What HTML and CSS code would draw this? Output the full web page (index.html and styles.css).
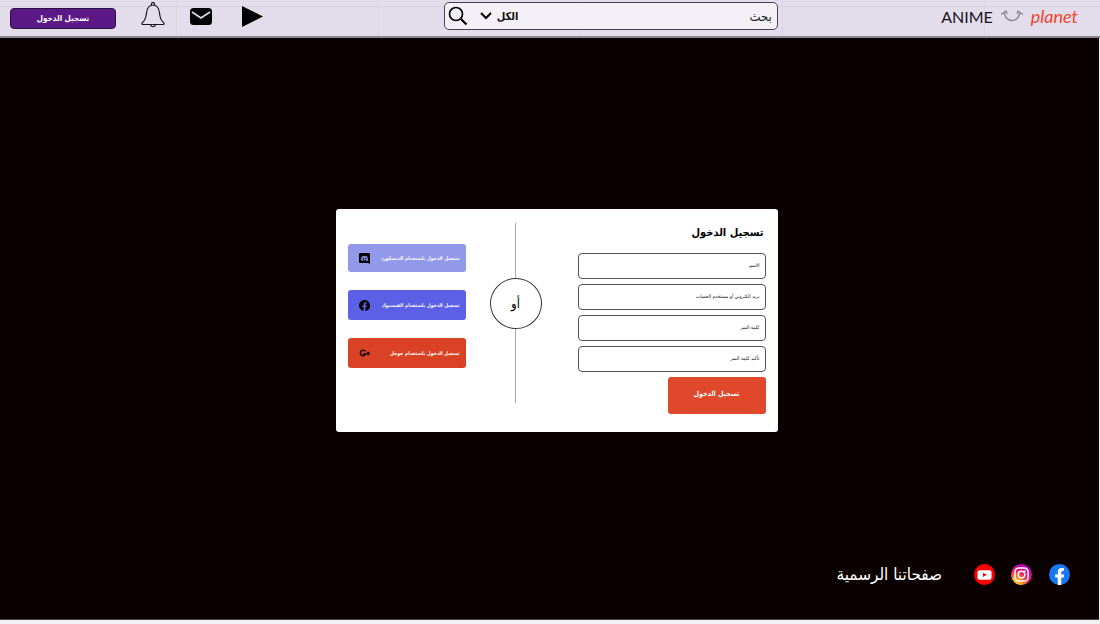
FILE: index.html
```html
<!DOCTYPE html>
<html lang="ar" dir="rtl">
<head>
<meta charset="utf-8">
<title>Anime Planet</title>
<link rel="stylesheet" href="styles.css">
</head>
<body>
<header class="topbar">
  <a class="logo" href="#" dir="ltr">
    <span class="logo-anime">ANIME</span>
    <svg class="logo-smile" viewBox="0 0 24 14" fill="none" stroke="#85808f" stroke-width="1.300"><path d="M1 5.500 6 2l1 3M17 5l1-3 5 3.500M4 3.500C5 8 8 11.500 12 11.500S19 8 20 3.500"/></svg>
    <span class="logo-planet">planet</span>
  </a>
  <form class="search">
    <input class="search-input" type="text" placeholder="بحث" aria-label="بحث">
    <span class="filter">
      <select class="filter-select" aria-label="القسم"><option>الكل</option></select>
      <svg class="chevron" viewBox="0 0 12 8" fill="none" stroke="#000" stroke-width="2"><path d="m1 1 5 5 5-5"/></svg>
    </span>
    <button class="icon-button" type="button" aria-label="ابحث"><svg class="glass" viewBox="0 0 20 20" fill="none" stroke="#000"><circle cx="8" cy="8" r="6.500" stroke-width="1.700"/><path d="m13 13 5.500 5.500" stroke-width="2.200"/></svg></button>
  </form>
  <nav class="actions">
    <button class="icon-button" type="button" aria-label="تشغيل"><svg class="play" viewBox="0 0 21 21"><path d="M0 0 21 10.500 0 21z"/></svg></button>
    <button class="icon-button" type="button" aria-label="الرسائل"><svg class="mail" viewBox="0 0 22 17"><rect width="22" height="17" rx="3.500"/><path d="m2 4 9 6 9-6" fill="none" stroke="#e3ddeb" stroke-width="1.600"/></svg></button>
    <button class="icon-button" type="button" aria-label="الإشعارات"><svg class="bell" viewBox="0 0 24 26" fill="none" stroke="#17131c" stroke-width="1.200"><path d="M10.500 3V2a1.500 1.500 0 0 1 3 0v1M12 3C7.500 3 6 7 5.500 11 5 16 4 18.500 1.500 20.500c-.8.800-.6 2 .4 2h20.200c1 0 1.200-1.200.4-2C20 18.500 19 16 18.500 11 18 7 16.500 3 12 3zM9.500 22.500c.5 3 4.500 3 5 0"/></svg></button>
    <button class="login-button" type="button">تسجيل الدخول</button>
  </nav>
</header>
<main class="stage">
  <section class="card">
    <form class="login-form">
      <h1 class="title">تسجيل الدخول</h1>
      <input class="field" type="text" placeholder="الاسم" aria-label="الاسم">
      <input class="field" type="text" placeholder="بريد الكتروني أو مستخدم الحساب" aria-label="بريد الكتروني أو مستخدم الحساب">
      <input class="field" type="password" placeholder="كلمة السر" aria-label="كلمة السر">
      <input class="field" type="password" placeholder="تأكيد كلمة السر" aria-label="تأكيد كلمة السر">
      <button class="submit" type="button">تسجيل الدخول</button>
    </form>
    <div class="divider"><span class="line"></span><span class="or">أو</span><span class="line line-long"></span></div>
    <div class="providers">
      <button class="provider discord" type="button"><span>تسجيل الدخول باستخدام الديسكورد</span><svg class="brand" viewBox="0 0 12 12"><path d="M1 0h10l1 1v11l-2-1H1l-1-1V1z"/><path fill="#7d83cf" d="M3 4c1-1 1.500-1 2-.7h2C7.500 3 8 3 9 4c.7 1 1 2.500 1 4-.8.700-1.500.8-2 .8L7.500 8h-3L4 8.800c-.5 0-1.200-.1-2-.8 0-1.500.3-3 1-4z"/><circle cx="4.600" cy="6.200" r=".8"/><circle cx="7.400" cy="6.200" r=".8"/></svg></button>
      <button class="provider facebook" type="button"><span>تسجيل الدخول باستخدام الفيسبوك</span><svg class="brand" viewBox="0 0 24 24"><path d="M24 12a12 12 0 1 0-14 11.900v-8.400H7V12h3V9.400C10 6.400 11.800 4.700 14.500 4.700c1.300 0 2.700.2 2.700.2v3h-1.500C14.200 7.900 14 8.800 14 9.700V12h3.300l-.5 3.500H14v8.400A12 12 0 0 0 24 12z"/></svg></button>
      <button class="provider google" type="button"><span>تسجيل الدخول باستخدام جوجل</span><svg class="brand" viewBox="0 0 12 12" fill="none" stroke="#17100e" stroke-width="1.700"><path d="M7 3.700A3 3 0 1 0 7.300 6.500H4.500M8 6h4M10 4v4"/></svg></button>
    </div>
  </section>
  <footer class="socials">
    <a class="social social-facebook" href="#" aria-label="Facebook"><svg viewBox="0 0 24 24"><circle cx="12" cy="12" r="12" fill="#1877f2"/><path fill="#fff" d="M10 24v-8.500H7V12h3V9.400C10 6.400 11.800 4.700 14.500 4.700c1.300 0 2.700.2 2.700.2v3h-1.500C14.200 7.900 14 8.800 14 9.700V12h3.300l-.5 3.500H14V24z"/></svg></a>
    <a class="social" href="#" aria-label="Instagram"><svg viewBox="0 0 24 24"><defs><radialGradient id="ig" cx=".2" cy="1" r="1.100"><stop offset="0" stop-color="#ffd83d"/><stop offset=".3" stop-color="#ff9a1f"/><stop offset=".6" stop-color="#ed1d63"/><stop offset="1" stop-color="#a000c4"/></radialGradient></defs><circle cx="12" cy="12" r="12" fill="url(#ig)"/><g fill="none" stroke="#fff" stroke-width="1.700"><rect x="4.500" y="4.500" width="15" height="15" rx="4.500"/><circle cx="12" cy="12" r="3.800"/></g><circle cx="16" cy="8" r="1" fill="#fff"/></svg></a>
    <a class="social" href="#" aria-label="YouTube"><svg viewBox="0 0 24 24"><circle cx="12" cy="12" r="12" fill="#f00"/><rect x="4" y="7" width="16" height="11" rx="2.500" fill="#fff"/><path fill="#f00" d="m10.300 10 4.400 2.400-4.400 2.400z"/></svg></a>
    <span class="socials-label">صفحاتنا الرسمية</span>
  </footer>
</main>
</body>
</html>
```
FILE: styles.css
```css
* { box-sizing: border-box; }
body {
  margin: 0;
  min-height: 100vh;
  padding: 0 0 4px;
  display: flex;
  flex-direction: column;
  font-family: "DejaVu Sans Condensed", "DejaVu Sans", sans-serif;
  background: #f3f1f3;
}
button, input, select { font-family: inherit; margin: 0; }
svg { display: block; }

.topbar {
  display: grid;
  grid-template-columns: 29fr 30fr 40fr;
  align-items: start;
  height: 38px;
  border-bottom: 2px solid #8b858f;
  background:
    linear-gradient(#d9d4e1, #d9d4e1) 0 6px / 100% 1px no-repeat,
    linear-gradient(90deg, #dad5e2 1px, transparent 1px) 176px 0 / 202px 100%,
    #e3ddeb;
}
.logo {
  display: flex;
  justify-content: flex-end;
  align-items: center;
  gap: 7px;
  height: 32px;
  padding-right: 22px;
  text-decoration: none;
  font-family: Lato, sans-serif;
}
.logo-anime { font-size: 16px; color: #17131c; }
.logo-smile { width: 24px; height: 14px; }
.logo-planet { font-size: 18px; font-style: italic; color: #f2452b; }

.search {
  display: flex;
  align-items: center;
  height: 28px;
  margin-top: 2px;
  padding: 0 5px 0 3px;
  border: 1px solid #46424c;
  border-radius: 5px;
  background: #f3f1f7;
}
.search-input {
  flex: 1;
  min-width: 0;
  padding: 0;
  border: 0;
  outline: 0;
  background: none;
  font-size: 13px;
}
.search-input::placeholder { color: #222; opacity: 1; }
.filter { display: flex; align-items: center; gap: 4px; }
.filter-select {
  appearance: none;
  padding: 0;
  border: 0;
  background: none;
  font-size: 11px;
  font-weight: bold;
  color: #111;
}
.chevron { width: 12px; height: 8px; margin-left: 12px; }
.icon-button { padding: 0; border: 0; background: none; }
.glass { width: 20px; height: 20px; }

.actions {
  display: flex;
  justify-content: flex-end;
  align-items: center;
  height: 32px;
  padding-left: 10px;
}
.play { width: 21px; height: 21px; margin-left: 30px; }
.mail { width: 22px; height: 17px; margin-left: 25px; }
.bell { width: 24px; height: 26px; margin: 0 0 2px 25px; }
.login-button {
  width: 106px;
  height: 21px;
  margin-top: 4px;
  padding: 0;
  border: 1px solid #2c1240;
  border-radius: 4px;
  background: #5b1886;
  color: #fff;
  font-size: 8px;
  font-weight: bold;
}

.stage {
  flex: 1;
  display: flex;
  flex-direction: column;
  align-items: center;
  margin-right: 1px;
  padding-top: 171px;
  border-bottom: 1px solid #4a4247;
  background: #0b0000;
}
.card {
  display: flex;
  gap: 24px;
  width: 442px;
  min-height: 223px;
  margin-left: 14px;
  padding: 14px 12px 16px;
  border-radius: 3px;
  background: #fff;
}
.login-form {
  flex: 1;
  display: flex;
  flex-direction: column;
  gap: 5px;
  margin-left: 12px;
}
.title { margin: 0 2px 5px 0; font-size: 11px; line-height: 20px; }
.field {
  width: 100%;
  height: 26px;
  padding: 0 5px 2px;
  border: 1px solid #55525a;
  border-radius: 4px;
  background: #fff;
  font-size: 5px;
}
.field::placeholder { color: #111; opacity: 1; }
.submit {
  width: 98px;
  height: 37px;
  padding: 0 0 3px;
  border: 0;
  border-radius: 3px;
  background: #df482b;
  color: #fff;
  font-size: 7px;
  font-weight: bold;
}
.divider { display: flex; flex-direction: column; align-items: center; }
.line { width: 1px; height: 55px; background: #aaa; }
.line-long { height: 74px; }
.or {
  display: grid;
  place-items: center;
  width: 52px;
  height: 51px;
  border: 1px solid #333;
  border-radius: 50%;
  font-size: 13px;
}
.providers {
  display: flex;
  flex-direction: column;
  gap: 18px;
  width: 118px;
  padding-top: 21px;
}
.provider {
  display: flex;
  justify-content: space-between;
  align-items: center;
  height: 30px;
  padding: 0 6px 0 11px;
  border: 0;
  border-radius: 3px;
  color: #fff;
  font-size: 5px;
  font-weight: bold;
  white-space: nowrap;
}
.brand { width: 11px; height: 11px; }
.discord { height: 28px; background: #9299eb; }
.facebook { background: #5b60e6; }
.google { background: #d94224; }

.socials {
  display: flex;
  align-items: center;
  align-self: stretch;
  gap: 16px;
  margin-top: auto;
  padding: 0 29px 34px;
}
.social svg { width: 21px; height: 21px; }
.social-facebook { margin-left: 1px; }
.socials-label { margin-right: 16px; color: #fff; font-size: 17px; line-height: 22px; }
```
